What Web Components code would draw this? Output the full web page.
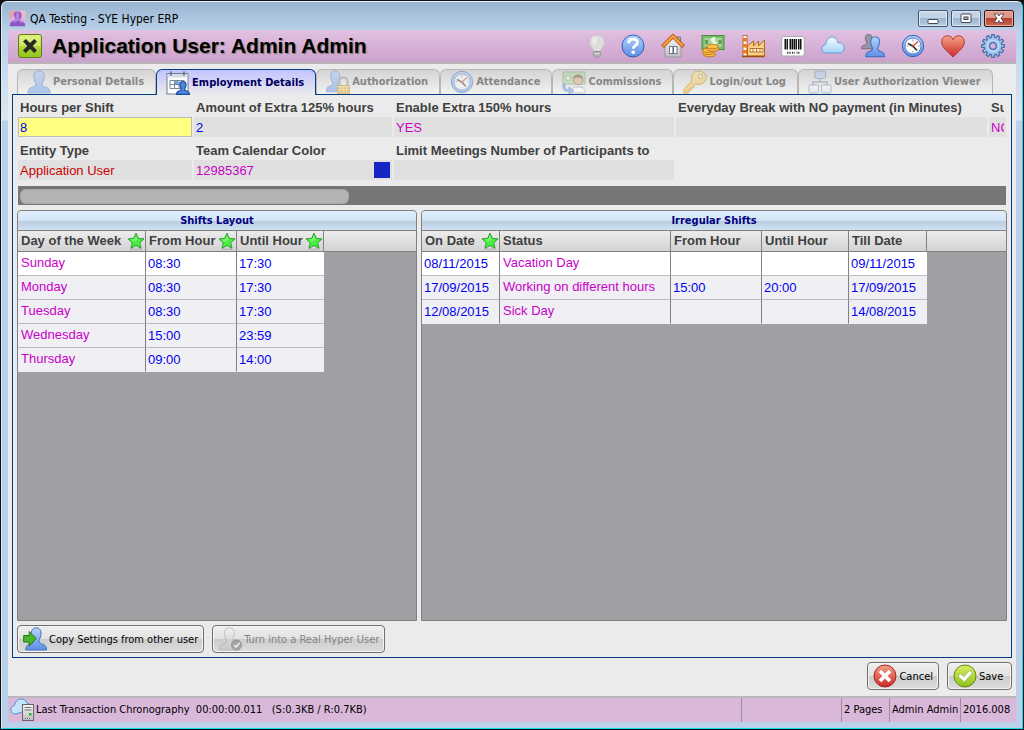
<!DOCTYPE html>
<html lang="en">
  <head>
    <meta charset="UTF-8" />
    <title>QA Testing - SYE Hyper ERP</title>
    <meta name="viewport" content="width=device-width, initial-scale=1.0" />
    <style>
      body {
        margin: 0;
        padding: 1px;
        background: #111;
        font-family: Tahoma, "DejaVu Sans Condensed", "DejaVu Sans", sans-serif;
        font-size: 11px;
        color: #000;
        --label-font: "Liberation Sans", Arial, sans-serif;
        --navy: #003c7f;
        --face: #ebebeb;
        --magenta: #c800c8;
        --blue: #0000f0;
      }
    </style>
  </head>

  <body>
    <erp-window caption="QA Testing - SYE Hyper ERP">
      <page-header slot="header" heading="Application User: Admin Admin"></page-header>

      <tab-strip>
        <tab-item icon="user">Personal Details</tab-item>
        <tab-item icon="calendar" active>Employment Details</tab-item>
        <tab-item icon="userlock">Authorization</tab-item>
        <tab-item icon="clock">Attendance</tab-item>
        <tab-item icon="commission">Commissions</tab-item>
        <tab-item icon="key">Login/out Log</tab-item>
        <tab-item icon="tree">User Authorization Viewer</tab-item>
      </tab-strip>

      <tab-panel>
        <field-grid>
          <form-field label="Hours per Shift" value="8" focused></form-field>
          <form-field label="Amount of Extra 125% hours" value="2"></form-field>
          <form-field label="Enable Extra 150% hours" value="YES" tone="magenta"></form-field>
          <form-field label="Everyday Break with NO payment (in Minutes)" value=""></form-field>
          <form-field label="Su" value="NO" tone="magenta"></form-field>
          <form-field label="Entity Type" value="Application User" tone="red"></form-field>
          <form-field label="Team Calendar Color" value="12985367" tone="magenta" swatch="#1725c6"></form-field>
          <form-field label="Limit Meetings Number of Participants to" value=""></form-field>
        </field-grid>
        <scroll-track></scroll-track>
        <split-view>
          <data-grid id="shifts" heading="Shifts Layout"></data-grid>
          <data-grid id="irregular" heading="Irregular Shifts"></data-grid>
        </split-view>
        <button-row>
          <action-button icon="copyuser">Copy Settings from other user</action-button>
          <action-button icon="usercheck" disabled>Turn into a Real Hyper User</action-button>
        </button-row>
      </tab-panel>

      <button-row align="end">
        <action-button icon="cancel">Cancel</action-button>
        <action-button icon="ok">Save</action-button>
      </button-row>

      <status-bar slot="footer"></status-bar>
    </erp-window>

    <script>
      const bust = 'M12 .8c-4 0-5.600 3-5.200 6.500.2 2.900 1.700 4.700 2.100 6.400.3 2-1 2.700-3.700 3.500C2.300 18 .8 19.500.8 23h22.400c0-3.500-1.500-5-4.400-5.800-2.700-.8-4-1.500-3.700-3.500.4-1.700 1.900-3.500 2.100-6.400C17.600 3.800 16 .8 12 .8z';

      const gradients = `
        <defs>
          <linearGradient id="b" x2="0" y2="1"><stop stop-color="#b5d2fb"/><stop offset="1" stop-color="#5c8fe4"/></linearGradient>
          <linearGradient id="l" x2="0" y2="1"><stop stop-color="#fff"/><stop offset="1" stop-color="#cfe0f4"/></linearGradient>
          <linearGradient id="g" x2="0" y2="1"><stop stop-color="#f5f5f5"/><stop offset="1" stop-color="#bdbdbd"/></linearGradient>
          <linearGradient id="y" x2="0" y2="1"><stop stop-color="#ffe98a"/><stop offset="1" stop-color="#eca414"/></linearGradient>
          <linearGradient id="r" x2="0" y2="1"><stop stop-color="#f3a286"/><stop offset="1" stop-color="#cc2b2b"/></linearGradient>
          <linearGradient id="n" x2="0" y2="1"><stop stop-color="#d9ee66"/><stop offset="1" stop-color="#8fc31b"/></linearGradient>
        </defs>`;

      const clock = `
        <circle cx="12" cy="12" r="10.700" fill="url(#b)" stroke="#2f62b5"/>
        <circle cx="12" cy="12" r="8" fill="#fafcff" stroke="#5b86c8"/>
        <path d="M12 5.500v1.500M12 17v1.500M5.500 12H7M17 12h1.500" stroke="#888"/>
        <path d="M7 9.500l5 2.700 4 4.300" fill="none" stroke="#333" stroke-width="1.700"/>
        <path d="M11 13l6-5.500" stroke="#e23b2e" stroke-width="1.200"/>`;

      // Outline of a cog wheel with the given number of teeth
      function gearPath(teeth, outer, inner) {
        const points = [];
        const step = (Math.PI * 2) / teeth;
        const corners = [[-0.34, inner], [-0.2, outer], [0.2, outer], [0.34, inner]];
        for (let i = 0; i < teeth; i++) {
          for (const [shift, radius] of corners) {
            const angle = (i + shift) * step - Math.PI / 2;
            points.push(`${(12 + radius * Math.cos(angle)).toFixed(2)} ${(12 + radius * Math.sin(angle)).toFixed(2)}`);
          }
        }
        return `M${points.join('L')}z`;
      }

      const icons = {
        app: `<rect x="1" y="1" width="22" height="22" fill="#d9b0df"/><path d="M1 1h9L4 12l-3 2z" fill="#e9a2a5"/><path d="M16 1h7v13l-4-3z" fill="#f0bcc4"/><path d="M12 2c-5 0-6 4-4 8 2 3 1 4-2 5-3 1-5 3-5 8h22c0-5-3-6-6-7-2-1-2-2 0-5 2-5 0-9-5-9z" fill="#8b55c4"/><path d="M12 3c-3 1-3 4-2 8l-5 8 8-4 7 5-6-9c2-4 1-8-2-8z" fill="#b184e0"/>`,
        exit: `<rect x=".5" y=".5" width="23" height="23" rx="2.500" fill="url(#n)" stroke="#5f8312"/><path d="M1.500 12V3q0-1.500 1.500-1.500h18q1.500 0 1.500 1.500v9z" fill="#e8f59a" opacity=".5"/><path d="M5 7.500L7.800 5l4.200 4L16.200 5 19 7.500 14.700 12l4.300 4.500-2.800 2.500-4.200-4-4.200 4L5 16.500 9.300 12z" fill="#262b20"/>`,
        bulb: `<g transform="translate(4 0)"><path d="M12 .7C7 .7 3.500 4.500 4.300 9.200c.6 3.300 3.700 4.800 4.200 8.800h7c.5-4 3.600-5.500 4.200-8.800C20.500 4.500 17 .7 12 .7z" fill="#dcdcdc" stroke="#c6bcc6"/><path d="M8.700 17.500h6.600v3.700l-1.800 2.100h-3l-1.800-2.100z" fill="#b5b5b5" stroke="#959595"/><path d="M9 19.500h6" stroke="#ddd"/><ellipse cx="9.500" cy="6.500" rx="2.500" ry="3.500" fill="#eaeaea"/></g>`,
        help: `<circle cx="12" cy="12" r="11" fill="url(#b)" stroke="#2f62b5"/><path d="M7.700 9.200C7.700 6.500 9.500 5.200 12 5.200s4.400 1.300 4.400 3.500c0 3-4.200 3-4.200 6" fill="none" stroke="#fff" stroke-width="2.800"/><circle cx="12.200" cy="18.300" r="1.800" fill="#fff"/>`,
        home: `<path d="M16 3h3.500v7H16z" fill="#bbb" stroke="#777"/><path d="M4 12l8-8 8 8v11H4z" fill="url(#g)" stroke="#999"/><rect x="8.500" y="12.500" width="7.500" height="7" fill="#fff" stroke="#737a91"/><path d="M12.200 12.500v7" stroke="#58617b" stroke-width="1.500"/><path d="M1.500 12.700L12 2.200l10.500 10.500" fill="none" stroke="#a84e08" stroke-width="4"/><path d="M2 12.200l10-10 10 10" fill="none" stroke="#f8a044" stroke-width="2.400"/>`,
        money: `<rect x="1" y="1.500" width="22" height="14" fill="#79bd6c" stroke="#4a8f40"/><rect x="3.500" y="4" width="17" height="9" fill="#a5d69a"/><rect x="4" y="6" width="3" height="4" fill="#5f9f55"/><rect x="17.500" y="6" width="3" height="4" fill="#5f9f55"/><path d="M14.500 4.500c-5-.5-5 2.500-2 3 4 .7 3 3-2.500 3M12.500 3v8" fill="none" stroke="#f5fff0" stroke-width="1.500"/><g fill="#fbc04a" stroke="#b3690a" stroke-width=".8"><ellipse cx="8.500" cy="20.500" rx="6" ry="2.300"/><ellipse cx="7.500" cy="18.300" rx="6" ry="2.300"/><ellipse cx="7.500" cy="16.200" rx="6" ry="2.300"/><ellipse cx="12" cy="15" rx="6" ry="2.300"/><ellipse cx="11.500" cy="12.500" rx="6" ry="2.300"/></g>`,
        factory: `<path d="M2 1.500h4V22H2z" fill="#fff" stroke="#a95816" stroke-width=".8"/><path d="M2 4h4v3.500H2zM2 10h4v3.500H2zM2 16h4v3.500H2z" fill="#f07b1a"/><path d="M6.500 22V12l6-5v5l5-5v5l6-6v16z" fill="#fbcf8a" stroke="#b3690a"/><path d="M1 22.500h22.500" stroke="#9a520b" stroke-width="1.500"/><path d="M9 14.500h13V18H9z" fill="#fff7d0" stroke="#a95816" stroke-width=".8"/><path d="M12 14.500V18M15.500 14.500V18M19 14.500V18" stroke="#a95816" stroke-width=".8"/>`,
        barcode: `<rect x=".7" y="2.500" width="22.600" height="19.500" rx="2" fill="#fff" stroke="#aaa"/><path d="M4.500 5v10.500M9.500 5v10.500M13.500 5v10.500M19.500 5v10.500" stroke="#111" stroke-width="2"/><path d="M6.500 5v10.500M11.500 5v10.500M15.500 5v10.500M17.500 5v10.500" stroke="#111"/><path d="M6 18.700h4M11 18.700h3M15.500 18.700h3.500" stroke="#444" stroke-width="2" stroke-dasharray="1 .6"/>`,
        cloud: `<path d="M5.500 19C2.500 19 .8 17 .8 14.800c0-2.400 1.700-3.900 3.900-4C5 7 7.500 3 11 3c3 0 5.200 2.600 6 6 3.500-.5 6.200 1.700 6.200 4.900 0 3-2 5.100-5 5.100z" fill="url(#c)" stroke="#5f9fd8"/><defs><linearGradient id="c" x2="0" y2="1"><stop stop-color="#f4fbff"/><stop offset="1" stop-color="#a6d3f6"/></linearGradient></defs>`,
        users: `<g transform="scale(.64)" fill="#9894a5" stroke="#716c7c" stroke-width="1.500"><path d="${bust}"/></g><g transform="translate(4 2) scale(.84 .9)"><path d="${bust}" fill="url(#b)" stroke="#4474c4" stroke-width="1.300"/></g>`,
        user: `<path d="${bust}" fill="url(#b)" stroke="#4474c4"/>`,
        clock: clock,
        heart: `<path d="M12 23C7 18 .7 13.500.7 8 .7 4 3.200 1.800 6.500 1.800c2.500 0 4.500 1.200 5.500 3.700 1-2.500 3-3.700 5.500-3.700 3.300 0 5.800 2.200 5.800 6.200 0 5.500-6.300 10-11.300 15z" fill="url(#r)" stroke="#b03a35"/>`,
        gear: `<path d="${gearPath(12, 11.4, 8.8)}" fill="#a4c2ea" stroke="#416fae" stroke-width="1.200"/><circle cx="12" cy="12" r="5.700" fill="none" stroke="#c2d7f3" stroke-width="1.500"/><circle cx="12" cy="12" r="3.300" fill="#d8b4dc" stroke="#416fae" stroke-width="1.300"/>`,
        calendar: `<rect x="1" y="2.500" width="21" height="20.500" fill="#fff" stroke="#6f7d90"/><path d="M1.500 3h20v3.500h-20z" fill="#d5dce6"/><path d="M5 .5v4M18 .5v4" stroke="#6f7d90" stroke-width="2"/><path d="M4 9.500h14v8H4zM4 13.500h14M8.500 9.500v8M13 9.500v8" fill="none" stroke="#7a8797"/><path d="M9 10h3.500v3H9z" fill="#6aa5ec"/><g transform="translate(10 10) scale(.58)"><path d="${bust}" fill="#4b85dc" stroke="#1d4d9c" stroke-width="2"/></g>`,
        userlock: `<path d="${bust}" transform="translate(-1 0) scale(.85 .95)" fill="url(#b)" stroke="#4474c4"/><path d="M13.500 16v-4c0-6 8-6 8 0v4" fill="none" stroke="#999" stroke-width="2.500"/><path d="M11.500 15.500h12v8h-12z" fill="url(#y)" stroke="#b27a13"/><path d="M12 18h11M12 21h11" stroke="#a86c0d" stroke-dasharray="2 1"/>`,
        commission: `<rect x="1" y="2" width="22" height="12" fill="#a9d59b" stroke="#65a857"/><circle cx="6" cy="8" r="2.500" fill="#eaf7e4" stroke="#65a857"/><path d="M9.500 23c0-4 2-6 5-6h3c4 0 5.500 2 5.500 6z" fill="#fff" stroke="#899"/><circle cx="16" cy="10" r="4.700" fill="#e8a878" stroke="#75513b"/><path d="M11 9c0-6 10-6 10 0-3-2-6-2-10 0z" fill="#6b4630"/><path d="M3 14v3c0 2 1 2.500 4 2.500V17l5 4-5 3v-2.500c-4 0-6-1-6-4V14z" fill="#5d94e8" stroke="#2d62ba" stroke-width=".7"/>`,
        key: `<path d="M15.500 1C11 1 8 4.500 8.400 8.600c0 1 .3 1.700.5 2.200L.8 19.500v3.700h4.500v-2.500H8v-2.900h3v-2.500l1.600-1.200c5.200 1.800 10.600-1.600 10.600-6.600C23.200 3.800 19.700 1 15.500 1z" fill="url(#y)" stroke="#b97910"/><circle cx="17.500" cy="6.500" r="2" fill="#fff" stroke="#b97910"/>`,
        tree: `<path d="M12 8v4M5 16v-4h14v4" fill="none" stroke="#7a8797" stroke-width="1.700"/><g fill="url(#l)" stroke="#6f87a8"><rect x="7" y="1" width="10.500" height="7.500" rx="1" fill="#a9c9f4"/><rect x="1" y="15" width="9.500" height="8" rx="1"/><rect x="13.500" y="15" width="9.500" height="8" rx="1"/></g>`,
        star: `<path d="M12 1.500l3.100 7 7.600.7-5.700 5.100 1.700 7.500-6.700-3.900-6.700 3.900L7 14.300 1.300 9.200l7.600-.7z" fill="#46f03e" stroke="#2f9a35" stroke-width="1.300"/><path d="M12 4.500l2.200 5.300-2.200 2-4 1.200-3-3 4.800-.6z" fill="#9cff8e" opacity=".6"/><path d="M5 23h14" stroke="#777" opacity=".6"/>`,
        copyuser: `<path d="${bust}" transform="translate(2 0) scale(.93 1)" fill="url(#b)" stroke="#3d6ec4"/><path d="M.7 8.500h5.500V4.500l7 7-7 7.500v-4H.7z" fill="#4bb52c" stroke="#237511"/>`,
        usercheck: `<path d="${bust}" transform="scale(.95 1)" fill="url(#g)" stroke="#999"/><circle cx="18.500" cy="18" r="5" fill="#777" stroke="#555"/><path d="M16 18l2 2 3.500-4" fill="none" stroke="#fff" stroke-width="1.700"/>`,
        cancel: `<circle cx="12" cy="12" r="11" fill="url(#r)" stroke="#a8231f"/><path d="M5.700 8.300L8.300 5.700l3.700 3.700 3.700-3.700 2.600 2.600-3.700 3.700 3.700 3.700-2.600 2.600-3.700-3.700-3.700 3.700-2.600-2.600L9.400 12z" fill="#fff"/>`,
        ok: `<circle cx="12" cy="12" r="11" fill="url(#n)" stroke="#5e8a12"/><path d="M5 12.500l2.500-2.700 3.500 3 5.500-6.300 3 2.500-8.200 9z" fill="#fff" stroke="#769c28" stroke-width=".5"/>`,
        server: `<path d="M6 16C2.500 16 .8 14 .8 11.500c0-2 1.500-3.800 3.700-4C5 4 7.500 1 11 1c3 0 5.200 1.600 6 4 3 .3 4 3 4 6z" fill="#c6e3fa" stroke="#4f94d4"/><rect x="12.500" y="6.500" width="11" height="16" fill="url(#g)" stroke="#666"/><path d="M14.500 9.500h7M14.500 12h7" stroke="#777"/><rect x="19" y="15" width="2.500" height="2.500" fill="#2db52d"/><path d="M15 20.500h5" stroke="#666" stroke-dasharray="1 1"/>`
      };

      // Shared base: puts the styles and markup of a component in its shadow root
      class Component extends HTMLElement {
        constructor() {
          super();
          this.attachShadow({ mode: 'open' });
        }
        attr(name) {
          return this.getAttribute(name) || '';
        }
        connectedCallback() {
          this.shadowRoot.innerHTML = this.render();
        }
      }

      class ErpIcon extends Component {
        render() {
          return `
            <style>
              :host { display: block; width: 24px; height: 24px; flex: none; }
              svg { display: block; width: 100%; height: 100%; }
            </style>
            <svg viewBox="0 0 24 24" aria-hidden="true">${gradients}${icons[this.attr('name')]}</svg>`;
        }
      }

      class ErpWindow extends Component {
        render() {
          return `
            <style>
              :host {
                display: flex; flex-direction: column; box-sizing: border-box;
                min-height: calc(100vh - 2px); padding: 0 6px 6px;
                border: 1px solid; border-color: #e8f4fb #16d8f0 #16d8f0 #dceaf6;
                border-radius: 6px 6px 0 0;
                background: linear-gradient(#99b4d1, #b9d1ea 28px, #d9e8f6 118px, #b9d1ea 119px);
              }
              .title { display: flex; align-items: center; height: 28px; gap: 4px; }
              .title erp-icon { width: 17px; height: 17px; margin: 4px 0 0 1px; }
              .caption { flex: 1; padding-top: 6px; font-size: 12px; }
              .controls { display: flex; gap: 3px; margin-right: 2px; padding-top: 4px; }
              .controls button {
                display: grid; place-items: center; width: 30px; height: 17px; padding: 0;
                border: 1px solid #45566b; border-radius: 2px;
                background: linear-gradient(#c3d4e6 50%, #9eb6cf 50%, #b7cbe0);
                box-shadow: inset 0 0 0 1px #dce8f4;
              }
              .controls .close {
                border-color: #430c12;
                background: linear-gradient(#dd9a8f 50%, #b8402d 50%, #cc6b50);
                box-shadow: inset 0 0 0 1px #e7b2a6;
              }
              .body { flex: 1; display: flex; flex-direction: column; padding: 5px 4px 6px; background: var(--face); }
            </style>
            <div class="title">
              <erp-icon name="app"></erp-icon>
              <span class="caption">${this.attr('caption')}</span>
              <div class="controls">
                <button aria-label="Minimize"><svg width="12" height="11"><rect x="1" y="6.500" width="10" height="4" rx="1" fill="#fff" stroke="#3d4557"/></svg></button>
                <button aria-label="Maximize"><svg width="12" height="11"><rect x="1" y="1" width="10" height="8.500" rx="1" fill="#fff" stroke="#3d4557"/><rect x="4" y="4" width="4" height="2.500" fill="#9eb6cf" stroke="#3d4557"/></svg></button>
                <button class="close" aria-label="Close"><svg width="12" height="11"><path d="M1 1h3.500L6 3l1.500-2H11L8 5.200l3 4.300H7.500L6 7.500l-1.500 2H1l3-4.300z" fill="#fff" stroke="#3d3c4c" stroke-width=".8"/></svg></button>
              </div>
            </div>
            <slot name="header"></slot>
            <main class="body"><slot></slot></main>
            <slot name="footer"></slot>`;
        }
      }

      class PageHeader extends Component {
        render() {
          const tools = ['bulb', 'help', 'home', 'money', 'factory', 'barcode', 'cloud', 'users', 'clock', 'heart', 'gear'];
          return `
            <style>
              :host {
                display: flex; align-items: center; height: 32px; padding: 0 11px 0 10px;
                background: linear-gradient(#e1c1e1, #cca2cc); border-bottom: 2px solid #b9b4b9;
              }
              h1 {
                flex: 1; margin: 0 0 0 10px; font: bold 21px/30px var(--label-font);
                text-shadow: 1px 1px 1px #777;
              }
              nav { display: flex; gap: 16px; }
              button { padding: 0; border: 0; background: none; }
            </style>
            <button aria-label="Exit"><erp-icon name="exit"></erp-icon></button>
            <h1>${this.attr('heading')}</h1>
            <nav>${tools.map((t) => `<button aria-label="${t}"><erp-icon name="${t}"></erp-icon></button>`).join('')}</nav>`;
        }
      }

      class TabStrip extends Component {
        render() {
          return `
            <style>
              :host { display: flex; padding-left: 5px; margin-bottom: -1px; }
            </style>
            <slot></slot>`;
        }
      }

      class TabItem extends Component {
        render() {
          return `
            <style>
              :host { display: block; }
              :host([active]) { position: relative; z-index: 1; }
              button {
                display: flex; align-items: center; gap: 2px; height: 25px; padding: 0 11px 0 9px;
                border: 1px solid #b6b6b6; border-bottom: 0; border-radius: 6px 6px 0 0;
                background: linear-gradient(#d4d4d4, #f2f2f2);
                font: bold 11px/22px Tahoma, "DejaVu Sans Condensed", sans-serif; color: #868686; white-space: nowrap;
              }
              erp-icon { opacity: .45; }
              :host([active]) button {
                height: 26px; border-color: var(--navy); color: #00005c;
                background: linear-gradient(#c3c3ff, var(--face));
              }
              :host([active]) erp-icon { opacity: 1; }
            </style>
            <button role="tab" aria-selected="${this.hasAttribute('active')}">
              <erp-icon name="${this.attr('icon')}"></erp-icon><slot></slot>
            </button>`;
        }
      }

      class TabPanel extends Component {
        render() {
          return `
            <style>
              :host {
                flex: 1; display: flex; flex-direction: column; min-width: 0;
                border: 1px solid var(--navy); padding: 4px; margin-bottom: 4px;
              }
            </style>
            <slot></slot>`;
        }
      }

      class FieldGrid extends Component {
        render() {
          return `
            <style>
              :host {
                display: grid; grid-template-columns: 174px 198px 280px 311px minmax(0, 1fr);
                gap: 5px 2px; margin: 0 1px 6px; overflow: hidden;
              }
            </style>
            <slot></slot>`;
        }
      }

      class FormField extends Component {
        render() {
          const swatch = this.attr('swatch');
          return `
            <style>
              :host { display: block; min-width: 0; color: var(--blue); }
              :host([tone="magenta"]) { color: var(--magenta); }
              :host([tone="red"]) { color: #cc0000; }
              label {
                display: block; margin: 0 2px; overflow: hidden; white-space: nowrap;
                font: bold 13px/18px var(--label-font); color: #404040;
              }
              .box { display: flex; align-items: center; height: 20px; background: #e0e0e0; }
              input {
                flex: 1; min-width: 0; height: 20px; box-sizing: border-box; padding: 0 2px;
                border: 0; outline: 0; background: none; color: inherit;
                font: 13px/16px var(--label-font);
              }
              .swatch { width: 16px; height: 16px; margin-right: 2px; }
              :host([focused]) .box { background: #ffff80; }
              :host([focused]) input { border: 1px solid #bcbcbc; padding: 0 1px; }
            </style>
            <label for="value">${this.attr('label')}</label>
            <div class="box">
              <input id="value" value="${this.attr('value')}" />
              ${swatch ? `<span class="swatch" style="background: ${swatch}"></span>` : ''}
            </div>`;
        }
      }

      class ScrollTrack extends Component {
        render() {
          return `
            <style>
              :host { display: block; height: 19px; box-sizing: border-box; margin: 0 1px 5px; padding: 3px 2px 1px; background: #767676; }
              .thumb { width: 33.4%; height: 15px; border-radius: 6px; background: #b4b4b4; box-shadow: inset 0 0 2px #8c8c8c; }
            </style>
            <div class="thumb"></div>`;
        }
      }

      class SplitView extends Component {
        render() {
          return `
            <style>
              :host { flex: 1; display: grid; grid-template-columns: 400fr 586fr; gap: 4px; margin-bottom: 4px; }
            </style>
            <slot></slot>`;
        }
      }

      const gridData = {
        shifts: {
          columns: [
            { text: 'Day of the Week', width: 128, star: true, tone: 'magenta' },
            { text: 'From Hour', width: 91, star: true },
            { text: 'Until Hour', width: 87, star: true }
          ],
          rows: [
            ['Sunday', '08:30', '17:30'],
            ['Monday', '08:30', '17:30'],
            ['Tuesday', '08:30', '17:30'],
            ['Wednesday', '15:00', '23:59'],
            ['Thursday', '09:00', '14:00']
          ]
        },
        irregular: {
          columns: [
            { text: 'On Date', width: 78, star: true },
            { text: 'Status', width: 171, tone: 'magenta' },
            { text: 'From Hour', width: 91 },
            { text: 'Until Hour', width: 87 },
            { text: 'Till Date', width: 78 }
          ],
          rows: [
            ['08/11/2015', 'Vacation Day', '', '', '09/11/2015'],
            ['17/09/2015', 'Working on different hours', '15:00', '20:00', '17/09/2015'],
            ['12/08/2015', 'Sick Day', '', '', '14/08/2015']
          ]
        }
      };

      class DataGrid extends Component {
        render() {
          const { columns, rows } = gridData[this.id];
          return `
            <style>
              :host {
                display: block; border: 1px solid #808080; border-radius: 4px 4px 0 0;
                background: #a09fa4; overflow: hidden;
              }
              h2 {
                margin: 0; border-bottom: 1px solid #808080; text-align: center;
                font: bold 11px/19px Tahoma, "DejaVu Sans Condensed", sans-serif; color: #000080;
                background: linear-gradient(#e0eefc, #d2e4f4 55%, #bacde0 55%, #d0e2f3);
              }
              table { width: 100%; table-layout: fixed; border-collapse: separate; border-spacing: 0; font: 13px/16px var(--label-font); }
              th {
                height: 20px; padding: 0 0 0 3px; text-align: left; color: #404040; white-space: nowrap;
                border-right: 1px solid #808080; border-bottom: 1px solid #808080;
                background: linear-gradient(#ececec, #d2d2d2);
              }
              th:last-child { border-right: 0; }
              .head { display: flex; align-items: center; justify-content: space-between; }
              .head erp-icon { width: 18px; height: 18px; }
              td {
                box-sizing: border-box; height: 24px; padding: 0 0 0 2px; white-space: nowrap; color: var(--blue);
                border-right: 1px solid #808080; border-bottom: 1px solid #bdbdbd; background: #f0eff4;
              }
              tr:first-child td { background: #fff; }
              tr:last-child td { border-bottom-color: #f0eff4; }
              td:nth-last-child(2) { border-right: 0; }
              tbody tr td:last-child { border: 0; background: none; }
              td.magenta { color: var(--magenta); padding: 0 0 2px 3px; }
            </style>
            <h2>${this.attr('heading')}</h2>
            <table>
              <colgroup>${columns.map((c) => `<col style="width: ${c.width}px" />`).join('')}<col /></colgroup>
              <thead>
                <tr>${columns.map((c) => `<th><div class="head">${c.text}${c.star ? '<erp-icon name="star"></erp-icon>' : ''}</div></th>`).join('')}<th></th></tr>
              </thead>
              <tbody>
                ${rows.map((row) => `<tr>${row.map((cell, i) => `<td class="${columns[i].tone || ''}">${cell}</td>`).join('')}<td></td></tr>`).join('')}
              </tbody>
            </table>`;
        }
      }

      class ButtonRow extends Component {
        render() {
          return `
            <style>
              :host { display: flex; gap: 8px; }
              :host([align="end"]) { justify-content: flex-end; }
            </style>
            <slot></slot>`;
        }
      }

      class ActionButton extends Component {
        render() {
          return `
            <style>
              :host { display: block; }
              button {
                display: flex; align-items: center; gap: 2px; height: 28px; min-width: 65px; padding: 0 5px;
                border: 1px solid #707070; border-radius: 4px; box-shadow: inset 0 0 0 1px #f4f4f4;
                background: linear-gradient(#efefef, #e2e2e2 50%, #cbcbcb 50%, #dedede);
                font: inherit; color: #000; white-space: nowrap;
              }
              button:disabled { color: #838383; }
              button:disabled erp-icon { opacity: .5; }
            </style>
            <button ${this.hasAttribute('disabled') ? 'disabled' : ''}>
              <erp-icon name="${this.attr('icon')}"></erp-icon><slot></slot>
            </button>`;
        }
      }

      class StatusBar extends Component {
        render() {
          return `
            <style>
              :host {
                display: flex; height: 24px; line-height: 23px; white-space: nowrap;
                border-top: 2px solid #bab8ba; background: #dab8da;
              }
              .cell { box-sizing: border-box; border-left: 1px solid #a08aa0; padding-left: 2px; }
              .main { flex: 1; display: flex; gap: 2px; border-left: 0; }
              .log { white-space: pre; }
              .blank { width: 100px; }
              .pages { width: 48px; }
              .user { width: 71px; }
              .version { width: 56px; }
            </style>
            <div class="cell main">
              <erp-icon name="server"></erp-icon>
              <span class="log">Last Transaction Chronography  00:00:00.011   (S:0.3KB / R:0.7KB)</span>
            </div>
            <div class="cell blank"></div>
            <div class="cell pages">2 Pages</div>
            <div class="cell user">Admin Admin</div>
            <div class="cell version">2016.008</div>`;
        }
      }

      customElements.define('erp-icon', ErpIcon);
      customElements.define('erp-window', ErpWindow);
      customElements.define('page-header', PageHeader);
      customElements.define('tab-strip', TabStrip);
      customElements.define('tab-item', TabItem);
      customElements.define('tab-panel', TabPanel);
      customElements.define('field-grid', FieldGrid);
      customElements.define('form-field', FormField);
      customElements.define('scroll-track', ScrollTrack);
      customElements.define('split-view', SplitView);
      customElements.define('data-grid', DataGrid);
      customElements.define('button-row', ButtonRow);
      customElements.define('action-button', ActionButton);
      customElements.define('status-bar', StatusBar);
    </script>
  </body>
</html>
